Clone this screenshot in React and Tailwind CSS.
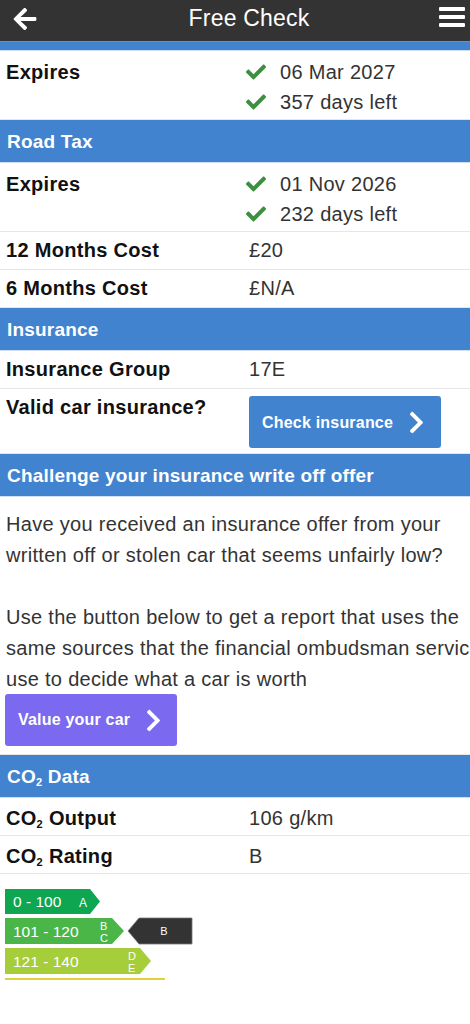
import { FaArrowLeft, FaCheck, FaChevronRight } from "react-icons/fa";

const font = { fontFamily: '"Liberation Sans", Arial, sans-serif' };

const SectionHeader = ({ children }) => (
  <div className="bg-[#4283cf] border-b border-[#cfe0f3] px-[7px] pt-[10px] pb-[9px] text-[19px] font-bold leading-[23px] tracking-[0.2px] text-white">
    {children}
  </div>
);

const Row = ({ label, children, className = "" }) => (
  <div className={`grid grid-cols-[249px_1fr] border-b border-[#e6e6e6] text-[20px] leading-[23px] tracking-[0.3px] ${className}`}>
    <div className="pl-[6px] font-bold text-[#111]">{label}</div>
    <div className="text-[#333]">{children}</div>
  </div>
);

const CheckLine = ({ children }) => (
  <div className="flex items-center leading-[30px]">
    <FaCheck className="ml-[-3px] mr-[14px] text-[20px] text-[#3f8f43]" />
    <span>{children}</span>
  </div>
);

const ExpiresRow = ({ date, days }) => (
  <div className="grid grid-cols-[249px_1fr] border-b border-[#e6e6e6] pt-[6px] pb-[2px] text-[20px] tracking-[0.3px]">
    <div className="pl-[6px] font-bold leading-[30px] text-[#111]">Expires</div>
    <div className="text-[#333]">
      <CheckLine>{date}</CheckLine>
      <CheckLine>{days}</CheckLine>
    </div>
  </div>
);

const Co2 = ({ rest }) => (
  <>
    CO<sub className="text-[11px]">2</sub> {rest}
  </>
);

const EnergyChart = () => (
  <svg width="200" height="95" viewBox="0 0 200 95" className="mt-[15px]" style={font}>
    <polygon points="5,0 90,0 100,12.5 90,25 5,25" fill="#0ea650" />
    <text x="13" y="18" fill="#fff" fontSize="15.5">0 - 100</text>
    <text x="79" y="18" fill="#fff" fontSize="12">A</text>

    <polygon points="5,29 112,29 124,42 112,55 5,55" fill="#4bb648" />
    <text x="13" y="48" fill="#fff" fontSize="15.5">101 - 120</text>
    <text x="100" y="41" fill="#fff" fontSize="11">B</text>
    <text x="100" y="53" fill="#fff" fontSize="11">C</text>

    <polygon points="5,59 140,59 151,72 140,85 5,85" fill="#a6cd3a" />
    <text x="13" y="78" fill="#fff" fontSize="15.5">121 - 140</text>
    <text x="128" y="71" fill="#fff" fontSize="11">D</text>
    <text x="128" y="83" fill="#fff" fontSize="11">E</text>

    <rect x="5" y="89" width="160" height="2" fill="#e2cf3e" />

    <polygon points="128,42 139,29 192,29 192,55 139,55" fill="#333" stroke="#777" strokeWidth="0.8" />
    <text x="164" y="46" fill="#fff" fontSize="11" textAnchor="middle">B</text>
  </svg>
);

export default function App() {
  return (
    <div className="h-[1024px] w-[470px] overflow-hidden bg-white" style={font}>
      <div className="relative flex h-[41px] items-start justify-center bg-[#333] pt-[5px]">
        <FaArrowLeft className="absolute left-[12px] top-[6px] text-[26px] text-white" />
        <span className="ml-[28px] text-[23px] leading-[26px] tracking-[0.2px] text-white">Free Check</span>
        <div className="absolute right-[5px] top-[7px] flex flex-col gap-[4px]">
          <div className="h-[4px] w-[26px] rounded-[1px] bg-white" />
          <div className="h-[4px] w-[26px] rounded-[1px] bg-white" />
          <div className="h-[4px] w-[26px] rounded-[1px] bg-white" />
        </div>
      </div>
      <div className="h-[1px] bg-[#8a8a8a]" />
      <div className="h-[9px] border-b border-[#cfe0f3] bg-[#4283cf]" />

      <ExpiresRow date="06 Mar 2027" days="357 days left" />
      <SectionHeader>Road Tax</SectionHeader>
      <ExpiresRow date="01 Nov 2026" days="232 days left" />
      <Row label="12 Months Cost" className="py-[7px]">£20</Row>
      <Row label="6 Months Cost" className="py-[7px]">£N/A</Row>

      <SectionHeader>Insurance</SectionHeader>
      <Row label="Insurance Group" className="py-[7px]">17E</Row>
      <div className="grid grid-cols-[249px_1fr] border-b border-[#e6e6e6] pt-[7px] pb-[5px] text-[20px] leading-[23px] tracking-[0.3px]">
        <div className="pl-[6px] font-bold text-[#111]">Valid car insurance?</div>
        <div>
          <button
            type="button"
            className="flex h-[52px] w-[192px] items-center rounded-[3px] bg-[#4283cf] pl-[13px] text-[16px] font-bold tracking-[0.2px] text-white"
          >
            Check insurance
            <FaChevronRight className="ml-[11px] text-[25px]" />
          </button>
        </div>
      </div>

      <SectionHeader>Challenge your insurance write off offer</SectionHeader>
      <div className="border-b border-[#e6e6e6] pb-[8px]">
        <p className="mb-[-1px] whitespace-nowrap pl-[6px] pt-[12px] text-[20px] leading-[31px] tracking-[0.3px] text-[#333]">
          Have you received an insurance offer from your
          <br />
          written off or stolen car that seems unfairly low?
          <br />
          <br />
          Use the button below to get a report that uses the
          <br />
          same sources that the financial ombudsman service
          <br />
          use to decide what a car is worth
        </p>
        <button
          type="button"
          className="ml-[5px] flex h-[52px] w-[172px] items-center rounded-[3px] bg-[#7b6aef] pl-[13px] text-[16px] font-bold tracking-[0.2px] text-white"
        >
          Value your car
          <FaChevronRight className="ml-[11px] text-[25px]" />
        </button>
      </div>

      <SectionHeader>
        <Co2 rest="Data" />
      </SectionHeader>
      <Row label={<Co2 rest="Output" />} className="pt-[9px] pb-[5px]">106 g/km</Row>
      <Row label={<Co2 rest="Rating" />} className="pt-[9px] pb-[5px]">B</Row>

      <EnergyChart />
    </div>
  );
}
